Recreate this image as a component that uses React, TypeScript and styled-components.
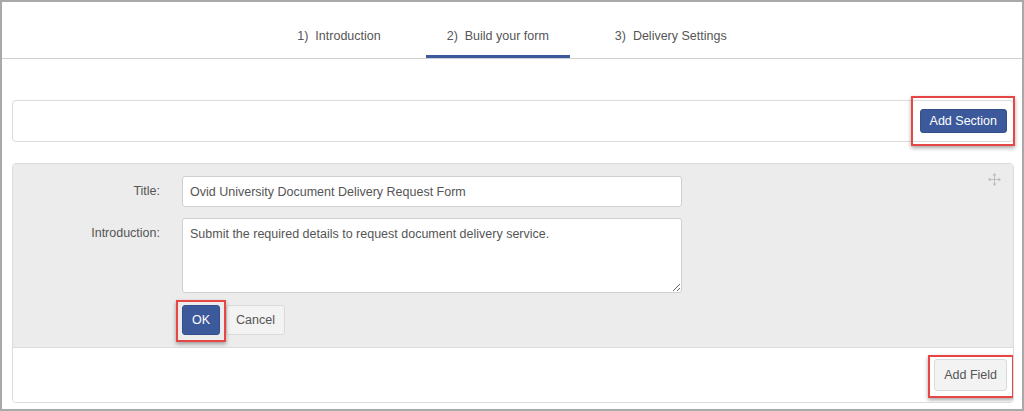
import React from 'react';
import styled, { createGlobalStyle } from 'styled-components';

const GlobalStyle = createGlobalStyle`
  body {
    margin: 0;
    font-family: 'Liberation Sans', Arial, sans-serif;
    background: #fff;
  }
`;

const BLUE = '#3c5a9b';

const Frame = styled.div`
  width: 1024px;
  height: 411px;
  box-sizing: border-box;
  border: 2px solid #a9a9a9;
  background: #fff;
  display: flex;
  flex-direction: column;
`;

const TabBar = styled.nav`
  display: flex;
  justify-content: center;
  gap: 24px;
  height: 56px;
  border-bottom: 1px solid #d0d0d0;
  flex-shrink: 0;
`;

const Tab = styled.div<{ $active?: boolean }>`
  display: flex;
  align-items: center;
  padding: 12px 21px 0;
  font-size: 12.5px;
  color: #555;
  box-shadow: ${({ $active }) => ($active ? `inset 0 -3px 0 ${BLUE}` : 'none')};
`;

const Content = styled.div`
  padding: 41px 8px 0 10px;
`;

const SectionBar = styled.div`
  height: 42px;
  box-sizing: border-box;
  border: 1px solid #dcdcdc;
  border-radius: 4px;
  display: flex;
  align-items: center;
  justify-content: flex-end;
  padding-right: 6px;
`;

const Highlight = styled.span<{ $t: number; $r: number; $b: number; $l: number }>`
  position: relative;
  display: inline-flex;

  &::after {
    content: '';
    position: absolute;
    top: -${({ $t }) => $t}px;
    right: -${({ $r }) => $r}px;
    bottom: -${({ $b }) => $b}px;
    left: -${({ $l }) => $l}px;
    border: 2px solid #e84545;
    box-shadow: 0 2px 4px rgba(0, 0, 0, 0.35);
    pointer-events: none;
  }
`;

const Button = styled.button<{ $primary?: boolean; $h?: number }>`
  height: ${({ $h }) => $h ?? 30}px;
  padding: 0 9px;
  font-family: inherit;
  font-size: 12.5px;
  border-radius: 3px;
  cursor: pointer;
  border: 1px solid ${({ $primary }) => ($primary ? '#34508c' : '#dadada')};
  background: ${({ $primary }) => ($primary ? BLUE : '#f3f3f3')};
  color: ${({ $primary }) => ($primary ? '#fff' : '#555')};
`;

const Panel = styled.section`
  margin-top: 21px;
  border: 1px solid #dcdcdc;
  border-radius: 4px;
  overflow: hidden;
`;

const PanelBody = styled.div`
  position: relative;
  background: #ececec;
  padding: 12px 0 12px;
  display: flex;
  flex-direction: column;
  gap: 11px;
`;

const MoveHandle = styled.span`
  position: absolute;
  top: 9px;
  right: 12px;
  display: flex;
`;

const FieldRow = styled.div`
  display: grid;
  grid-template-columns: 147px 500px;
  column-gap: 22px;
  align-items: start;
`;

const Label = styled.label`
  text-align: right;
  font-size: 12.5px;
  line-height: 31px;
  color: #555;
`;

const TextInput = styled.input`
  height: 31px;
  box-sizing: border-box;
  border: 1px solid #cfcfcf;
  border-radius: 3px;
  padding: 0 7px;
  font-family: inherit;
  font-size: 12.5px;
  color: #555;
  background: #fff;
  outline: none;
`;

const TextArea = styled.textarea`
  height: 75px;
  box-sizing: border-box;
  border: 1px solid #cfcfcf;
  border-radius: 3px;
  padding: 7px;
  font-family: inherit;
  font-size: 12.5px;
  line-height: 16px;
  color: #555;
  background: #fff;
  outline: none;
  resize: vertical;
`;

const ButtonRow = styled.div`
  display: flex;
  gap: 6px;
  margin: 1px 0 0 169px;
`;

const PanelFooter = styled.div`
  height: 54px;
  border-top: 1px solid #dcdcdc;
  display: flex;
  align-items: center;
  justify-content: flex-end;
  padding-right: 6px;
  background: #fff;
`;

const MoveIcon = () => (
  <svg width="13" height="13" viewBox="0 0 13 13" fill="#bdbdbd">
    <rect x="6" y="2" width="1" height="9" />
    <rect x="2" y="6" width="9" height="1" />
    <polygon points="6.5,0 4.5,2.5 8.5,2.5" />
    <polygon points="6.5,13 4.5,10.5 8.5,10.5" />
    <polygon points="0,6.5 2.5,4.5 2.5,8.5" />
    <polygon points="13,6.5 10.5,4.5 10.5,8.5" />
  </svg>
);

const App = () => {
  return (
    <>
      <GlobalStyle />
      <Frame>
        <TabBar>
          <Tab>1)&nbsp; Introduction</Tab>
          <Tab $active>2)&nbsp; Build your form</Tab>
          <Tab>3)&nbsp; Delivery Settings</Tab>
        </TabBar>
        <Content>
          <SectionBar>
            <Highlight $t={13} $r={8} $b={13} $l={9}>
              <Button $primary $h={24}>Add Section</Button>
            </Highlight>
          </SectionBar>
          <Panel>
            <PanelBody>
              <MoveHandle>
                <MoveIcon />
              </MoveHandle>
              <FieldRow>
                <Label htmlFor="title">Title:</Label>
                <TextInput
                  id="title"
                  defaultValue="Ovid University Document Delivery Request Form"
                />
              </FieldRow>
              <FieldRow>
                <Label htmlFor="intro">Introduction:</Label>
                <TextArea
                  id="intro"
                  defaultValue="Submit the required details to request document delivery service."
                />
              </FieldRow>
              <ButtonRow>
                <Highlight $t={5} $r={6} $b={7} $l={6}>
                  <Button $primary>OK</Button>
                </Highlight>
                <Button>Cancel</Button>
              </ButtonRow>
            </PanelBody>
            <PanelFooter>
              <Highlight $t={4} $r={7} $b={7} $l={6}>
                <Button $h={32}>Add Field</Button>
              </Highlight>
            </PanelFooter>
          </Panel>
        </Content>
      </Frame>
    </>
  );
};

export default App;
